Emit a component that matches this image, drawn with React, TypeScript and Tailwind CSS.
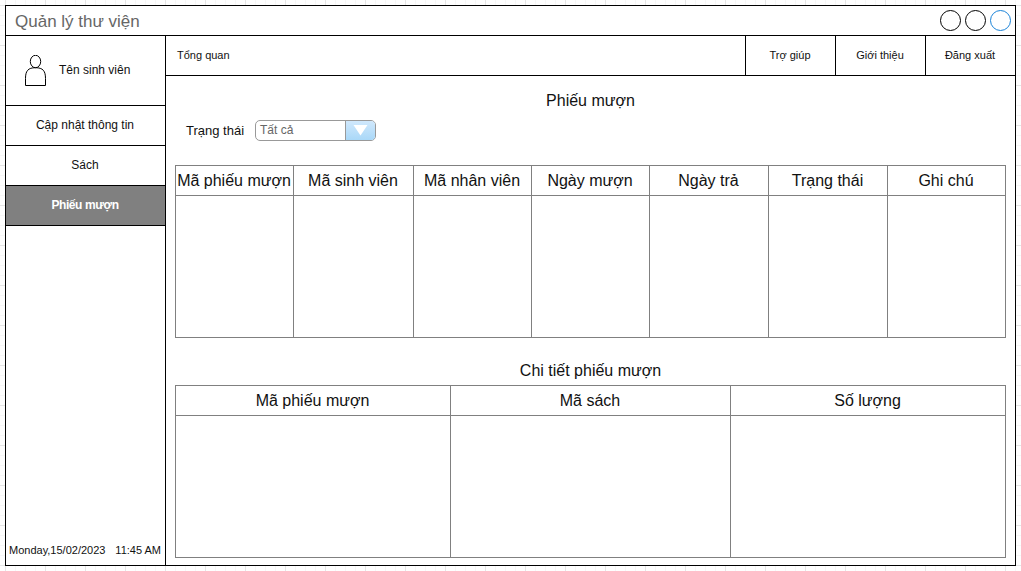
const menuItems = [
  { label: 'Cập nhật thông tin', active: false },
  { label: 'Sách', active: false },
  { label: 'Phiếu mượn', active: true },
];

const navItems = ['Trợ giúp', 'Giới thiệu', 'Đăng xuất'];

const loanColumns = [
  { label: 'Mã phiếu mượn', width: 'w-[118px]' },
  { label: 'Mã sinh viên', width: 'w-[120px]' },
  { label: 'Mã nhân viên', width: 'w-[118px]' },
  { label: 'Ngày mượn', width: 'w-[118px]' },
  { label: 'Ngày trả', width: 'w-[119px]' },
  { label: 'Trạng thái', width: 'w-[119px]' },
  { label: 'Ghi chú', width: 'w-[118px]' },
];

const detailColumns = [
  { label: 'Mã phiếu mượn', width: 'w-[275px]' },
  { label: 'Mã sách', width: 'w-[280px]' },
  { label: 'Số lượng', width: 'w-[275px]' },
];

function DataTable({ columns }: { columns: { label: string; width: string }[] }) {
  return (
    <div className="flex h-[173px] w-[831px] border-l border-[#808080]">
      {columns.map((column) => (
        <div
          key={column.label}
          className={`${column.width} flex flex-col border-y border-r border-[#808080]`}
        >
          <div className="flex h-[30px] items-center justify-center border-b border-[#808080] pr-px text-base whitespace-nowrap">
            {column.label}
          </div>
        </div>
      ))}
    </div>
  );
}

function UserIcon() {
  return (
    <svg width="22" height="32" viewBox="0 0 22 32" fill="none" stroke="#000" strokeWidth="1">
      <ellipse cx="10.5" cy="6.5" rx="5.2" ry="6.2" />
      <path d="M10.500 12.700C3 12.700 .5 16 .5 23.500V30.500H20.500V23.500C20.500 16 18 12.700 10.500 12.700" />
    </svg>
  );
}

function StatusSelect() {
  return (
    <button
      type="button"
      className="flex h-[21px] w-[121px] overflow-hidden rounded-[5px] border border-[#999] bg-white text-left text-xs text-[#666]"
    >
      <span className="flex-1 pl-1 leading-[18px]">Tất cả</span>
      <span className="flex h-full w-[30px] items-center justify-center border-l border-[#999] bg-linear-to-b from-[#d0e8fc] to-[#a9d8f8]">
        <svg width="15" height="11" viewBox="0 0 15 11" fill="#fff">
          <path d="M.5 0H14.500L7.500 10.500Z" />
        </svg>
      </span>
    </button>
  );
}

export default function App() {
  return (
    <div className="h-[571px] w-[1021px] overflow-hidden bg-white bg-[linear-gradient(to_right,#e6e6e6_1px,transparent_1px),linear-gradient(to_bottom,#e6e6e6_1px,transparent_1px),linear-gradient(to_right,#f7f7f7_1px,transparent_1px),linear-gradient(to_bottom,#f7f7f7_1px,transparent_1px)] bg-[size:40px_40px,40px_40px,10px_10px,10px_10px] bg-[position:5px_5px] p-[5px] font-['Liberation_Sans',Arial,sans-serif] text-[#111]">
      <div className="flex h-[561px] w-[1011px] flex-col border border-black bg-white">
        <header className="flex h-[30px] shrink-0 items-center justify-between border-b border-black pr-1 pl-[9px]">
          <h1 className="pt-[2px] text-[17px] leading-none text-[#666]">Quản lý thư viện</h1>
          <div className="flex gap-1">
            <span className="size-[21px] rounded-full border border-black" />
            <span className="size-[21px] rounded-full border border-black" />
            <span className="size-[21px] rounded-full border border-[#1a83d8]" />
          </div>
        </header>

        <div className="flex flex-1">
          <aside className="flex w-[160px] flex-col border-r border-black text-xs">
            <div className="flex h-[70px] items-center gap-3 border-b border-black pl-[19px]">
              <UserIcon />
              <span className="pb-[2px]">Tên sinh viên</span>
            </div>
            {menuItems.map((item) => (
              <div
                key={item.label}
                className={`flex h-10 items-center justify-center border-b border-black pr-px pb-[2px] ${
                  item.active ? 'bg-[#808080] font-bold tracking-[-0.4px] text-white' : ''
                }`}
              >
                {item.label}
              </div>
            ))}
            <div className="mt-auto flex justify-between pr-1 pb-[7px] pl-[3px] text-[11px] leading-4 whitespace-nowrap">
              <span>Monday,15/02/2023</span>
              <span>11:45 AM</span>
            </div>
          </aside>

          <main className="flex flex-1 flex-col">
            <nav className="flex h-10 border-b border-black text-[11px]">
              <div className="flex flex-1 items-center pl-[11px]">Tổng quan</div>
              {navItems.map((label) => (
                <div
                  key={label}
                  className="flex w-[90px] items-center justify-center border-l border-black pr-px"
                >
                  {label}
                </div>
              ))}
            </nav>

            <section className="flex flex-col px-[9px]">
              <h2 className="mt-[15px] h-5 text-center text-base leading-5">Phiếu mượn</h2>
              <div className="mt-[9px] flex h-[21px] items-center gap-[11px] pl-[11px]">
                <span className="w-[58px] text-[13px] whitespace-nowrap">Trạng thái</span>
                <StatusSelect />
              </div>
              <div className="mt-6">
                <DataTable columns={loanColumns} />
              </div>
              <h2 className="mt-[23px] h-5 text-center text-base leading-5">Chi tiết phiếu mượn</h2>
              <div className="mt-1">
                <DataTable columns={detailColumns} />
              </div>
            </section>
          </main>
        </div>
      </div>
    </div>
  );
}
